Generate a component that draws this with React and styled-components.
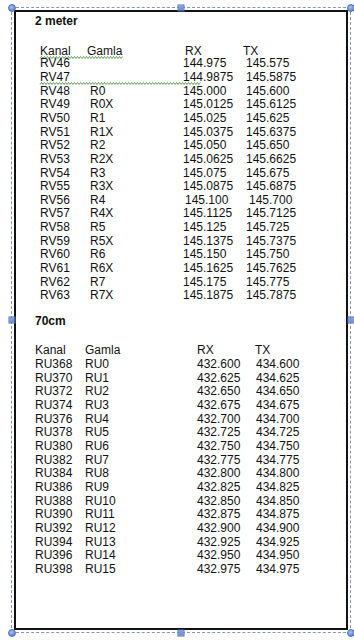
import React from "react";
import styled, { createGlobalStyle } from "styled-components";

const GlobalStyle = createGlobalStyle`
  html, body {
    margin: 0;
    padding: 0;
    background: #ffffff;
  }
  body {
    font-family: "Liberation Sans", Arial, sans-serif;
  }
`;

const twoMeter = [
  ["RV46", "", "144.975", "145.575"],
  ["RV47", "", "144.9875", "145.5875"],
  ["RV48", "R0", "145.000", "145.600"],
  ["RV49", "R0X", "145.0125", "145.6125"],
  ["RV50", "R1", "145.025", "145.625"],
  ["RV51", "R1X", "145.0375", "145.6375"],
  ["RV52", "R2", "145.050", "145.650"],
  ["RV53", "R2X", "145.0625", "145.6625"],
  ["RV54", "R3", "145.075", "145.675"],
  ["RV55", "R3X", "145.0875", "145.6875"],
  ["RV56", "R4", "145.100", "145.700"],
  ["RV57", "R4X", "145.1125", "145.7125"],
  ["RV58", "R5", "145.125", "145.725"],
  ["RV59", "R5X", "145.1375", "145.7375"],
  ["RV60", "R6", "145.150", "145.750"],
  ["RV61", "R6X", "145.1625", "145.7625"],
  ["RV62", "R7", "145.175", "145.775"],
  ["RV63", "R7X", "145.1875", "145.7875"],
];

const seventyCm = Array.from({ length: 16 }, (_, i) => [
  `RU${368 + i * 2}`,
  `RU${i}`,
  (432.6 + i * 0.025).toFixed(3),
  (434.6 + i * 0.025).toFixed(3),
]);

// small hand offsets seen in the document (tabs not quite lined up)
const nudges = {
  RV56: { rx: 2, tx: 3 },
  RU398: { dx: -2, rx: -1 },
};

const Page = styled.div`
  width: 354px;
  height: 640px;
  padding: 7px 0 0 11px;
  box-sizing: border-box;
`;

const Selection = styled.div`
  position: relative;
  width: 340px;
  height: 626px;
  box-sizing: border-box;
  border: 1px dashed #7f98c4;
  padding: 2px;
`;

const Handle = styled.span`
  position: absolute;
  left: calc(${(p) => p.$x}% + ${(p) => p.$x / 100 - 0.5}px);
  top: calc(${(p) => p.$y}% + ${(p) => p.$y / 100 - 0.5}px);
  width: ${(p) => (p.$round ? 8 : 7)}px;
  height: ${(p) => (p.$round ? 8 : 7)}px;
  transform: translate(-50%, -50%);
  box-sizing: border-box;
  border: 1px solid #4d6fb3;
  border-radius: ${(p) => (p.$round ? "50%" : "0")};
  background: ${(p) =>
    p.$round
      ? "radial-gradient(circle at 40% 35%, #a9c2ee 0%, #6e90d6 60%, #5476c0 100%)"
      : "linear-gradient(#88a6e2, #6b8bd2)"};
`;

const Frame = styled.div`
  height: 100%;
  box-sizing: border-box;
  border: 2px solid #111;
  padding: 2.6px 0 0 19px;
  color: #111;
  font-size: 12px;
  line-height: 13.65px;
`;

const Heading = styled.div`
  font-weight: bold;
  margin-top: ${(p) => p.$top}px;
`;

const Table = styled.div`
  display: flex;
  flex-direction: column;
  margin-top: ${(p) => p.$top}px;
  padding-left: ${(p) => p.$indent}px;
`;

const Row = styled.div`
  position: relative;
  display: grid;
  grid-template-columns: ${(p) => p.$cols};
  white-space: nowrap;
  height: ${(p) => p.$height || 13.65}px;
  line-height: ${(p) => p.$height || 13.65}px;
  padding-left: ${(p) => p.$dx || 0}px;
  margin-bottom: ${(p) => p.$after || 0}px;
`;

const Cell = styled.span`
  padding-left: ${(p) => p.$shift || 0}px;
`;

const Wave = styled.svg`
  position: absolute;
  left: 0;
  top: ${(p) => p.$top}px;
  overflow: visible;
  pointer-events: none;
`;

const Squiggle = ({ width, top = 11 }) => {
  let d = "M0 2.5";
  for (let x = 1.5, up = true; x <= width; x += 1.5, up = !up) {
    d += ` L${x} ${up ? 0.5 : 2.5}`;
  }
  return (
    <Wave $top={top} width={width} height={3} viewBox={`0 0 ${width} 3`}>
      <path d={d} fill="none" stroke="#4e9b45" strokeWidth="0.9" />
    </Wave>
  );
};

const Section = ({ title, titleTop, tableTop, indent, headCols, cols, headAfter, rows, headWave, waveRow }) => (
  <>
    <Heading $top={titleTop}>{title}</Heading>
    <Table $top={tableTop} $indent={indent}>
      <Row $cols={headCols} $height={12} $after={headAfter}>
        <Cell>Kanal</Cell>
        <Cell>Gamla</Cell>
        <Cell>RX</Cell>
        <Cell>TX</Cell>
        {headWave && <Squiggle width={headWave} top={10.2} />}
      </Row>
      {rows.map(([kanal, gamla, rx, tx]) => {
        const n = nudges[kanal] || {};
        return (
          <Row key={kanal} $cols={cols} $dx={n.dx}>
            <Cell>{kanal}</Cell>
            <Cell>{gamla}</Cell>
            <Cell $shift={n.rx}>{rx}</Cell>
            <Cell $shift={n.tx}>{tx}</Cell>
            {waveRow && waveRow.kanal === kanal && <Squiggle width={waveRow.width} />}
          </Row>
        );
      })}
    </Table>
  </>
);

const handles = [
  [0, 0, true],
  [50, 0, false],
  [100, 0, true],
  [0, 50, false],
  [100, 50, false],
  [0, 100, true],
  [50, 100, false],
  [100, 100, true],
];

export default function App() {
  return (
    <>
      <GlobalStyle />
      <Page>
        <Selection>
          <Frame>
            <Section
              title="2 meter"
              titleTop={0}
              tableTop={17.15}
              indent={5}
              headCols="47px 98px 58px auto"
              cols="50px 93px 63px auto"
              headAfter={0}
              rows={twoMeter}
              headWave={83}
              waveRow={{ kanal: "RV47", width: 161 }}
            />
            <Section
              title="70cm"
              titleTop={12.3}
              tableTop={15.15}
              indent={0}
              headCols="50px 112px 58px auto"
              cols="50px 112px 59px auto"
              headAfter={2.2}
              rows={seventyCm}
            />
          </Frame>
          {handles.map(([x, y, round]) => (
            <Handle key={`${x}-${y}`} $x={x} $y={y} $round={round} />
          ))}
        </Selection>
      </Page>
    </>
  );
}
